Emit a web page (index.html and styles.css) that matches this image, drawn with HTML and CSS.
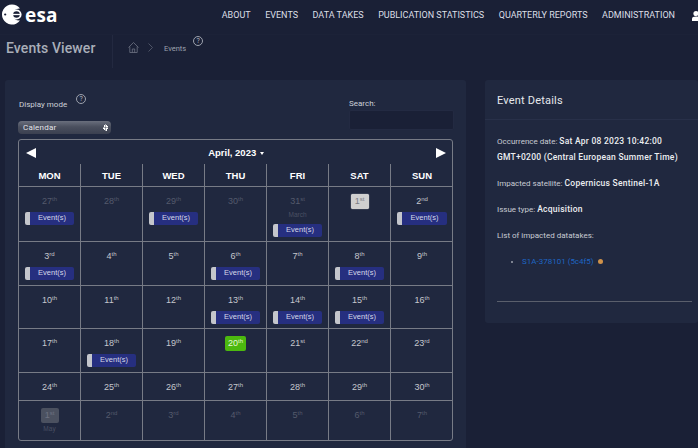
FILE: index.html
```html
<!DOCTYPE html>
<html lang="en">

<head>
    <meta charset="UTF-8" />
    <meta name="viewport" content="width=device-width, initial-scale=1.0" />
    <title>Events Viewer</title>
    <link rel="stylesheet" href="styles.css">
</head>

<body>

    <header class="topbar">
        <div class="logo">
            <svg class="logo-mark" width="20" height="21" viewBox="0 0 20 21">
                <path fill="#fff" d="M10 0.5a10 10 0 0 1 8 4a7.5 7.5 0 0 0 -8 6a7.5 7.5 0 0 0 8 6a10 10 0 1 1 -8 -16z" />
                <circle cx="3.2" cy="10.5" r="1.1" fill="#1a2036" />
                <circle cx="14.5" cy="10.5" r="4.2" fill="none" stroke="#fff" stroke-width="1.8" />
                <path stroke="#fff" stroke-width="1.3" d="M11 10.5h7" />
            </svg>
            <span class="logo-text">esa</span>
        </div>
        <nav class="mainnav">
            <a>ABOUT</a>
            <a>EVENTS</a>
            <a>DATA TAKES</a>
            <a>PUBLICATION STATISTICS</a>
            <a>QUARTERLY REPORTS</a>
            <a>ADMINISTRATION</a>
        </nav>
        <svg class="user-icon" width="8" height="12" viewBox="0 0 9 12">
            <circle cx="4.5" cy="3.2" r="2.9" fill="#fff" />
            <path fill="#fff" d="M0 11.5v-2.2c0-1.6 1.6-2.6 4.5-2.6s4.5 1 4.5 2.6v2.2z" />
        </svg>
    </header>

    <div class="titlebar">
        <h1>Events Viewer</h1>
        <div class="crumbs">
            <svg width="11" height="11" viewBox="0 0 11 11" fill="none" stroke="#6e7484" stroke-width="0.8">
                <path d="M0.5 5.5l5-5 5 5M1.8 4.5v6h7.4v-6M4.3 10.5v-3.500h2.400v3.500" />
            </svg>
            <svg class="crumb-sep" width="5" height="9" viewBox="0 0 5 9" fill="none" stroke="#5b6172" stroke-width="0.8">
                <path d="M0.500 0.500l4 4-4 4" />
            </svg>
            <span>Events</span>
            <span class="help help-crumb">?</span>
        </div>
    </div>

    <main class="content">
        <section class="panel calendar-panel">
            <div class="controls">
                <div class="mode">
                    <div class="mode-label">Display mode <span class="help">?</span></div>
                    <div class="select">
                        <span>Calendar</span>
                        <span class="stepper"></span>
                    </div>
                </div>
                <div class="search">
                    <label>Search:</label>
                    <div class="search-input"></div>
                </div>
            </div>

            <div class="calendar">
                <div class="cal-toolbar">
                    <span class="arrow arrow-left"></span>
                    <span class="cal-title">April, 2023 <span class="caret"></span></span>
                    <span class="arrow arrow-right"></span>
                </div>
                <div class="cal-grid">
                    <div class="dow">MON</div>
                    <div class="dow">TUE</div>
                    <div class="dow">WED</div>
                    <div class="dow">THU</div>
                    <div class="dow">FRI</div>
                    <div class="dow">SAT</div>
                    <div class="dow">SUN</div>

                    <div class="cell muted"><span class="day">27<sup>th</sup></span><div class="event"><span>Event(s)</span></div></div>
                    <div class="cell muted"><span class="day">28<sup>th</sup></span></div>
                    <div class="cell muted"><span class="day">29<sup>th</sup></span><div class="event"><span>Event(s)</span></div></div>
                    <div class="cell muted"><span class="day">30<sup>th</sup></span></div>
                    <div class="cell muted"><span class="day">31<sup>st</sup></span><div class="month">March</div><div class="event event-low"><span>Event(s)</span></div></div>
                    <div class="cell"><span class="day day-first">1<sup>st</sup></span></div>
                    <div class="cell"><span class="day">2<sup>nd</sup></span><div class="event"><span>Event(s)</span></div></div>

                    <div class="cell"><span class="day">3<sup>rd</sup></span><div class="event"><span>Event(s)</span></div></div>
                    <div class="cell"><span class="day">4<sup>th</sup></span></div>
                    <div class="cell"><span class="day">5<sup>th</sup></span></div>
                    <div class="cell"><span class="day">6<sup>th</sup></span><div class="event"><span>Event(s)</span></div></div>
                    <div class="cell"><span class="day">7<sup>th</sup></span></div>
                    <div class="cell"><span class="day">8<sup>th</sup></span><div class="event"><span>Event(s)</span></div></div>
                    <div class="cell"><span class="day">9<sup>th</sup></span></div>

                    <div class="cell"><span class="day">10<sup>th</sup></span></div>
                    <div class="cell"><span class="day">11<sup>th</sup></span></div>
                    <div class="cell"><span class="day">12<sup>th</sup></span></div>
                    <div class="cell"><span class="day">13<sup>th</sup></span><div class="event"><span>Event(s)</span></div></div>
                    <div class="cell"><span class="day">14<sup>th</sup></span><div class="event"><span>Event(s)</span></div></div>
                    <div class="cell"><span class="day">15<sup>th</sup></span><div class="event"><span>Event(s)</span></div></div>
                    <div class="cell"><span class="day">16<sup>th</sup></span></div>

                    <div class="cell"><span class="day">17<sup>th</sup></span></div>
                    <div class="cell"><span class="day">18<sup>th</sup></span><div class="event"><span>Event(s)</span></div></div>
                    <div class="cell"><span class="day">19<sup>th</sup></span></div>
                    <div class="cell"><span class="day day-today">20<sup>th</sup></span></div>
                    <div class="cell"><span class="day">21<sup>st</sup></span></div>
                    <div class="cell"><span class="day">22<sup>nd</sup></span></div>
                    <div class="cell"><span class="day">23<sup>rd</sup></span></div>

                    <div class="cell"><span class="day">24<sup>th</sup></span></div>
                    <div class="cell"><span class="day">25<sup>th</sup></span></div>
                    <div class="cell"><span class="day">26<sup>th</sup></span></div>
                    <div class="cell"><span class="day">27<sup>th</sup></span></div>
                    <div class="cell"><span class="day">28<sup>th</sup></span></div>
                    <div class="cell"><span class="day">29<sup>th</sup></span></div>
                    <div class="cell"><span class="day">30<sup>th</sup></span></div>

                    <div class="cell muted"><span class="day day-next">1<sup>st</sup></span><div class="month">May</div></div>
                    <div class="cell muted"><span class="day">2<sup>nd</sup></span></div>
                    <div class="cell muted"><span class="day">3<sup>rd</sup></span></div>
                    <div class="cell muted"><span class="day">4<sup>th</sup></span></div>
                    <div class="cell muted"><span class="day">5<sup>th</sup></span></div>
                    <div class="cell muted"><span class="day">6<sup>th</sup></span></div>
                    <div class="cell muted"><span class="day">7<sup>th</sup></span></div>
                </div>
            </div>
        </section>

        <aside class="panel details-panel">
            <h2>Event Details</h2>
            <div class="details-body">
                <p class="date-line">Occurrence date: <b>Sat Apr 08 2023 10:42:00 GMT+0200 (Central European Summer Time)</b></p>
                <p>Impacted satellite: <b>Copernicus Sentinel-1A</b></p>
                <p>Issue type: <b>Acquisition</b></p>
                <p>List of impacted datatakes:</p>
                <ul>
                    <li><a>S1A-378101 (5c4f5)</a><span class="status-dot"></span></li>
                </ul>
                <hr />
            </div>
        </aside>
    </main>

</body>

</html>
```

FILE: styles.css
```css
* {
    box-sizing: border-box;
    margin: 0;
    padding: 0;
}

html,
body {
    height: 448px;
    overflow: hidden;
}

body {
    background: #1a2036;
    color: #d5d8df;
    font-family: 'Roboto', sans-serif;
    font-size: 8px;
}

.topbar {
    display: flex;
    align-items: center;
    height: 35px;
    padding-left: 2px;
    padding-bottom: 5px;
    border-bottom: 1px solid #1c2238;
}

.logo {
    display: flex;
    align-items: center;
    gap: 3px;
}

.logo-text {
    color: #fff;
    font-family: 'Open Sans', sans-serif;
    font-size: 19px;
    font-weight: 700;
    line-height: 20px;
    letter-spacing: 0.2px;
}

.mainnav {
    display: flex;
    gap: 14.500px;
    margin-left: 164px;
    white-space: nowrap;
}

.mainnav a {
    color: #dcdfe6;
    font-size: 9px;
}

.user-icon {
    flex: none;
    margin-left: 17px;
    margin-top: 2px;
}

.titlebar {
    display: flex;
    height: 45px;
    padding-left: 6px;
}

.titlebar h1 {
    width: 107px;
    height: 33px;
    padding-top: 3px;
    color: #a9aeb9;
    font-size: 14px;
    font-weight: 500;
    letter-spacing: 0.1px;
    line-height: 20px;
    border-right: 1px solid #232940;
}

.crumbs {
    display: flex;
    align-items: flex-start;
    padding: 7px 0 0 15px;
    color: #9da2ae;
    font-size: 7.500px;
}

.crumbs span {
    margin-top: 2px;
}

.crumb-sep {
    margin: 1px 11px 0 9px;
}

.help {
    display: inline-block;
    width: 10px;
    height: 10px;
    border: 1px solid #9da2ae;
    border-radius: 50%;
    color: #b4b8c2;
    font-size: 7px;
    line-height: 8px;
    text-align: center;
}

.crumbs .help-crumb {
    margin: -6px 0 0 7px;
}

.content {
    display: flex;
    align-items: flex-start;
    gap: 19px;
    padding-left: 5px;
}

.panel {
    background: #20283f;
    border-radius: 3px;
}

.calendar-panel {
    flex: none;
    width: 461px;
    height: 380px;
    padding: 0 12px 0 13px;
}

.controls {
    display: flex;
    justify-content: space-between;
    height: 59px;
}

.mode-label {
    height: 41px;
    padding: 20px 0 0 1px;
    color: #cdd0d8;
}

.mode-label .help {
    position: relative;
    top: -6px;
    margin-left: 7px;
}

.select {
    display: flex;
    justify-content: space-between;
    align-items: center;
    width: 93px;
    height: 13px;
    padding: 0 3px 0 5px;
    border-radius: 4px;
    background: linear-gradient(#6a6f7d, #4a4f5e 45%, #3b4050);
    color: #e4e6ea;
    font-size: 8px;
    letter-spacing: 0.2px;
}

.stepper {
    width: 5px;
    height: 8px;
    background:
        linear-gradient(to bottom right, transparent 50%, #fff 50%) left top / 50% 3.500px no-repeat,
        linear-gradient(to bottom left, transparent 50%, #fff 50%) right top / 50% 3.500px no-repeat,
        linear-gradient(to top right, transparent 50%, #fff 50%) left bottom / 50% 3.500px no-repeat,
        linear-gradient(to top left, transparent 50%, #fff 50%) right bottom / 50% 3.500px no-repeat;
}

.search {
    width: 105px;
    padding-top: 18px;
    color: #cdd0d8;
}

.search label {
    display: block;
    height: 12px;
    line-height: 11px;
}

.search-input {
    height: 20px;
    background: #1a2036;
    border: 1px solid #232a42;
    border-radius: 2px;
}

.calendar {
    width: 435px;
    height: 302px;
    border: 1px solid #777b86;
    border-radius: 3px;
    font-family: 'Liberation Sans', sans-serif;
}

.cal-toolbar {
    display: flex;
    justify-content: space-between;
    align-items: center;
    height: 24px;
    padding: 1px 5.500px 0 6.500px;
}

.arrow {
    width: 0;
    height: 0;
    border-top: 5px solid transparent;
    border-bottom: 5px solid transparent;
}

.arrow-left {
    border-right: 10px solid #fff;
}

.arrow-right {
    border-left: 10px solid #fff;
}

.cal-title {
    color: #fff;
    font-size: 9.500px;
    font-weight: 700;
}

.caret {
    display: inline-block;
    margin-left: 1px;
    vertical-align: 1px;
    border-top: 3px solid #fff;
    border-left: 2.500px solid transparent;
    border-right: 2.500px solid transparent;
}

.cal-grid {
    display: grid;
    grid-template-columns: repeat(7, 62px);
    grid-template-rows: 23px 55px 44px 43px 44px 28px 40px;
    margin-right: -1px;
}

.dow {
    padding-top: 6px;
    border-right: 1px solid #777b86;
    border-bottom: 1px solid #777b86;
    color: #fff;
    font-size: 9.500px;
    font-weight: 700;
    text-align: center;
}

.cell {
    padding: 6.500px 6px 0;
    border-right: 1px solid #777b86;
    border-bottom: 1px solid #777b86;
    color: #c5c7cd;
    font-size: 9px;
    text-align: center;
}

.cell:nth-child(7n),
.dow:nth-child(7n) {
    border-right: 0;
}

.cell:nth-last-child(-n+7) {
    border-bottom: 0;
}

.cell.muted {
    color: #545a6c;
}

.day {
    display: inline-block;
    height: 15px;
    min-width: 18px;
    padding: 0 3px;
    border-radius: 2px;
    line-height: 15px;
}

.day sup {
    font-size: 6px;
    line-height: 0;
    vertical-align: 3px;
}

.day-first {
    background: #cfcfcf;
    color: #7b7d84;
    box-shadow: 0 0 1px #fff;
}

.day-today {
    background: #4cb90f;
    color: #e6f5da;
}

.cell.muted .day-next {
    background: #4b5160;
    color: #6d7282;
}

.month {
    color: #4a5063;
    font-size: 6.500px;
    line-height: 8px;
    margin-top: 2px;
}

.event {
    display: flex;
    height: 13px;
    margin-top: 3px;
    background: #262f80;
    border-left: 5px solid #c4c6cc;
    border-radius: 2px;
    color: #d5d8e8;
    font-size: 7.500px;
    line-height: 12px;
}

.event span {
    flex: 1;
    text-align: center;
}

.event-low {
    margin-top: 5px;
}

.details-panel {
    flex: 1;
    height: 243px;
    margin-right: 0;
}

.details-panel h2 {
    height: 40px;
    padding: 12px 0 0 12px;
    border-bottom: 1px solid #283049;
    color: #e6e8ec;
    font-size: 11px;
    font-weight: 400;
    letter-spacing: 0.2px;
    line-height: 17px;
}

.details-body {
    padding: 14px 6px 0 12px;
    color: #c8cbd3;
    font-size: 8px;
    line-height: 16px;
}

.details-body p {
    margin-bottom: 10px;
}

.details-body b {
    color: #eceef1;
    font-size: 8.500px;
    font-weight: 500;
    letter-spacing: 0.25px;
    line-height: 1;
}

.date-line {
    width: 195px;
}

.details-body ul {
    margin-top: 7px;
    padding-left: 25px;
    color: #9da2ae;
}

.details-body a {
    color: #1e66c4;
}

.status-dot {
    display: inline-block;
    width: 5px;
    height: 5px;
    margin-left: 4px;
    border-radius: 50%;
    background: #cf924a;
}

.details-body hr {
    margin-top: 31px;
    border: 0;
    border-top: 1px solid #5a5f6c;
}
```
